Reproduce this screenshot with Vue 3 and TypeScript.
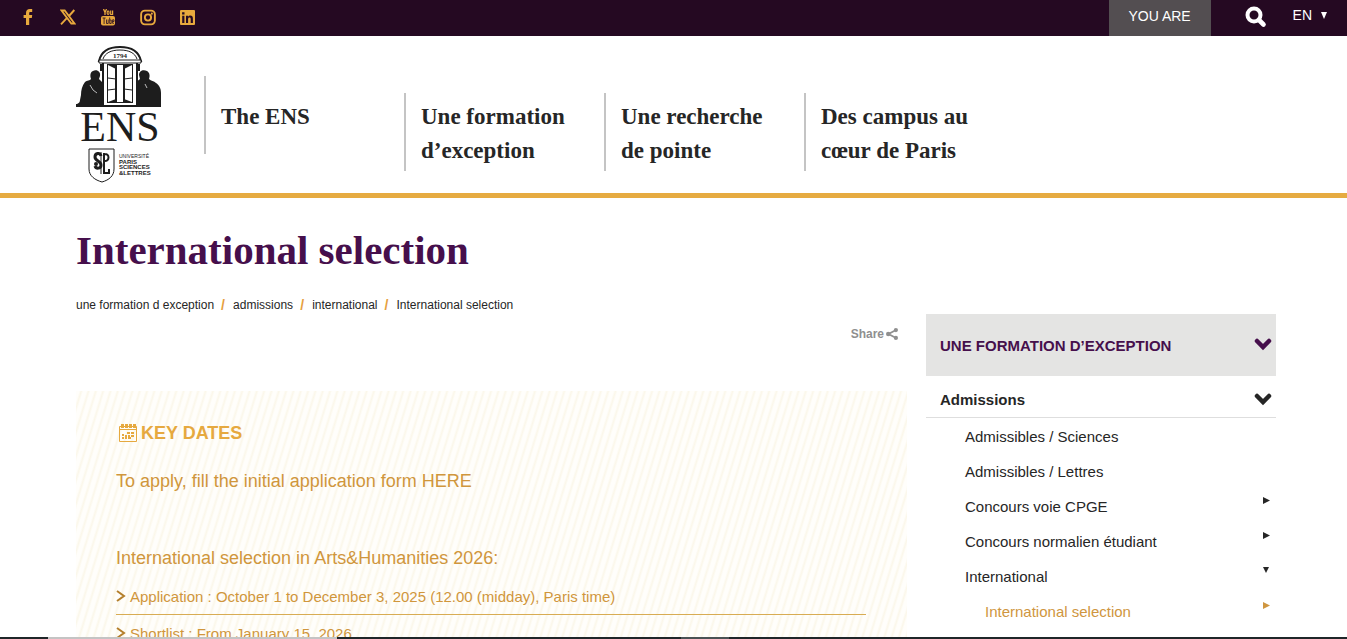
<script setup lang="ts">
interface NavItem {
  lines: string[]
}
interface SideItem {
  label: string
  arrow: '' | 'right' | 'down'
  current?: boolean
}

const navItems: NavItem[] = [
  { lines: ['The ENS'] },
  { lines: ['Une formation', 'd’exception'] },
  { lines: ['Une recherche', 'de pointe'] },
  { lines: ['Des campus au', 'cœur de Paris'] },
]

const crumbs: string[] = ['une formation d exception', 'admissions', 'international', 'International selection']

const dates: string[] = [
  'Application : October 1 to December 3, 2025 (12.00 (midday), Paris time)',
  'Shortlist : From January 15, 2026',
]

const sideItems: SideItem[] = [
  { label: 'Admissibles / Sciences', arrow: '' },
  { label: 'Admissibles / Lettres', arrow: '' },
  { label: 'Concours voie CPGE', arrow: 'right' },
  { label: 'Concours normalien étudiant', arrow: 'right' },
  { label: 'International', arrow: 'down' },
  { label: 'International selection', arrow: 'right', current: true },
]
</script>

<template>
  <div class="page">
    <div class="topbar">
      <div class="social">
        <a href="#" aria-label="Facebook">
          <svg width="16" height="16" viewBox="0 0 16 16"><path d="M6 16V9H3.600V6H6V4C6 1.400 7.500 0 9.800 0h2.400v3h-1.700C9.500 3 9.200 3.500 9.200 4.200V6h3l-.4 3H9.200v7z" fill="currentColor" /></svg>
        </a>
        <a href="#" aria-label="X">
          <svg width="16" height="16" viewBox="0 0 16 16"><path d="M1.500 1.500h3.200l9.800 13h-3.200z" fill="none" stroke="currentColor" stroke-width="1.800" /><path d="M14.300 1 9 7M6.800 9.200 1 15.300" fill="none" stroke="currentColor" stroke-width="1.900" /></svg>
        </a>
        <a href="#" aria-label="YouTube">
          <svg width="16" height="17" viewBox="0 0 16 17">
            <path d="M3.500 0 5 3.400V6M6.500 0 5 3.400" fill="none" stroke="currentColor" stroke-width="1.300" />
            <rect x="7.200" y="2" width="1.800" height="3.500" rx=".9" fill="none" stroke="currentColor" stroke-width="1.100" />
            <path d="M10.700 1.500v4h1.900v-4" fill="none" stroke="currentColor" stroke-width="1.200" />
            <rect x="1" y="7" width="14" height="9.500" rx="2" fill="currentColor" />
            <path d="M2.600 9h3M4.100 9v6M6.500 10.500v4h1.700v-4M9.700 8.500v6h1.500v-3.500H9.700M13.900 14.300h-1.300v-3.500h1.400v1.700h-1.400" fill="none" stroke="#250922" stroke-width=".8" />
          </svg>
        </a>
        <a href="#" aria-label="Instagram">
          <svg width="16" height="17" viewBox="0 0 17 17"><rect x="1.200" y="1.200" width="14.600" height="14.600" rx="4" fill="none" stroke="currentColor" stroke-width="2" /><circle cx="8.500" cy="8.500" r="3.300" fill="none" stroke="currentColor" stroke-width="2" /><circle cx="12.600" cy="4.400" r="1.100" fill="currentColor" /></svg>
        </a>
        <a href="#" aria-label="LinkedIn">
          <svg width="15" height="15" viewBox="0 0 15 15"><rect width="15" height="15" rx="1" fill="currentColor" /><path d="M2.200 5.800h2.200V13H2.200zM2.100 2.300h2.400v2.200H2.100zM6 5.800h2v1c.5-.8 1.200-1.200 2.200-1.200 2 0 2.700 1.200 2.700 3.200V13h-2.200V9.300c0-1-.3-1.700-1.200-1.700-1 0-1.400.7-1.400 1.700V13H6z" fill="#250922" /></svg>
        </a>
      </div>
      <div class="tools">
        <button class="you-are" type="button">YOU ARE</button>
        <button class="search" type="button" aria-label="Search">
          <svg width="22" height="22" viewBox="0 0 22 22"><circle cx="9" cy="9" r="6.500" fill="none" stroke="#fff" stroke-width="4" /><path d="m14 14 4.500 4.500" stroke="#fff" stroke-width="4.600" stroke-linecap="round" /></svg>
        </button>
        <button class="lang" type="button">EN <svg width="8" height="7" viewBox="0 0 8 7"><path d="M1 0h6L4 7z" fill="#fff" /></svg></button>
      </div>
    </div>

    <header class="header">
      <a class="logo" href="#" aria-label="ENS">
        <svg width="86" height="140" viewBox="0 0 86 140">
          <g fill="#1d1d1d">
            <path d="M1 58c2-1 3-2 3-4l1-5c0-5 1-9 4-13 2-2 5-1 6-3-1-3-1-7 2-8 4-2 8 1 7 5l-1 3 5 5v21H1z" />
            <path d="M85 60V47c0-5-2-8-5-10-2-2-5-2-7-4 1-3 1-6-2-8-4-2-8 0-8 4l1 4-5 4v22z" />
            <path d="M0 58h85v3H0z" />
          </g>
          <path d="m14 39 3 5 4 3M69 38l2 4" fill="none" stroke="#fff" stroke-width=".7" />
          <path d="M23 15C25 6 32 1 44 1s19 5 21 14z" fill="#fff" stroke="#1d1d1d" stroke-width="2" />
          <path d="M27 13C29 7 35 4 44 4s15 3 17 9" fill="none" stroke="#1d1d1d" stroke-width="1" />
          <path d="M27 15h34v45H27z" fill="#fff" stroke="#1d1d1d" stroke-width="2" />
          <path d="M23 14h42v3H23z" fill="#fff" stroke="#1d1d1d" stroke-width="1" />
          <path d="M24 18h3v7h-3zM61 18h3v7h-3z" fill="#1d1d1d" />
          <path d="M31 18h26v39H31z" fill="#1d1d1d" />
          <path d="M41 19h6v37h-6z" fill="#fff" />
          <path d="m32 19 8 4v30l-8 3zM56 19l-8 4v30l8 3z" fill="#fff" />
          <path d="m32 32 8 1M32 44l8-1M56 32l-8 1M56 44l-8-1" stroke="#1d1d1d" stroke-width="1" />
          <path d="M40 22v32M48 22v32" stroke="#1d1d1d" stroke-width="2" />
          <text x="44" y="12" text-anchor="middle" class="logo-year">1794</text>
          <text x="44" y="95" text-anchor="middle" class="logo-ens">ENS</text>
          <path d="M13 103h25v20c0 7-5 11-12 13-7-2-13-6-13-13z" fill="#fff" stroke="#1d1d1d" stroke-width="1" />
          <path d="M25 110c-1-4-6-3-6 1 0 4 6 4 6 8 0 4-5 4-6 1" fill="none" stroke="#1d1d1d" stroke-width="3" />
          <path d="M25 106v22" fill="none" stroke="#1d1d1d" stroke-width="1" />
          <path d="M28 107v20h5v-4M28 108c6-1 6 8 0 7" fill="none" stroke="#1d1d1d" stroke-width="2" />
          <circle cx="20" cy="118" r="2" fill="#1d1d1d" />
          <g class="logo-psl">
            <text x="43" y="112" class="light">UNIVERSITÉ</text>
            <text x="43" y="118">PARIS</text>
            <text x="43" y="123">SCIENCES</text>
            <text x="43" y="129">&amp;LETTRES</text>
          </g>
        </svg>
      </a>
      <nav class="nav">
        <a v-for="item in navItems" :key="item.lines[0]" href="#" :class="{ single: item.lines.length === 1 }">
          <span v-for="line in item.lines" :key="line">{{ line }}</span>
        </a>
      </nav>
    </header>

    <div class="container">
      <h1>International selection</h1>
      <nav class="crumbs" aria-label="Breadcrumb">
        <template v-for="(crumb, i) in crumbs" :key="crumb">
          <span v-if="i > 0" class="slash">/</span>
          <a href="#">{{ crumb }}</a>
        </template>
      </nav>

      <div class="columns">
        <main>
          <div class="share-row">
            <a href="#" class="share">Share
              <svg width="12" height="12" viewBox="0 0 12 12"><path d="M10 2 2.500 6l7.500 4" fill="none" stroke="currentColor" stroke-width="1.800" /><circle cx="9.900" cy="2.100" r="2.100" fill="currentColor" /><circle cx="2.200" cy="6" r="2.200" fill="currentColor" /><circle cx="9.900" cy="9.900" r="2.100" fill="currentColor" /></svg>
            </a>
          </div>
          <section class="panel">
            <h2>
              <svg width="18" height="18" viewBox="0 0 18 18"><path d="M.5 2.500h17v15H.5zM.5 5.500h17" fill="none" stroke="currentColor" stroke-width="1" /><path d="M2 0h3v4H2zM6 0h3v4H6zM10 0h3v4h-3zM14 0h3v4h-3z" fill="currentColor" /><path d="M8 8h3v2H8zM12 8h3v2h-3zM3 10h2v2H3zM6 11h2v2H6zM9 11h2v2H9zM12 11h3v2h-3zM3 13h2v2H3zM6 13h2v2H6zM9 13h3v2H9z" fill="currentColor" /></svg>
              KEY DATES
            </h2>
            <p class="apply">To apply, fill the initial application form <a href="#">HERE</a></p>
            <h3>International selection in Arts&amp;Humanities 2026:</h3>
            <ul>
              <li v-for="date in dates" :key="date">
                <svg width="10" height="12" viewBox="0 0 10 12"><path d="m1 1 7 5-7 5" fill="none" stroke="#b47f2c" stroke-width="2" /></svg>
                <span>{{ date }}</span>
              </li>
            </ul>
          </section>
        </main>

        <aside>
          <button class="side-title" type="button">
            UNE FORMATION D’EXCEPTION
            <svg width="18" height="14" viewBox="0 0 18 14"><path d="m3 3 6 6 6-6" fill="none" stroke="currentColor" stroke-width="4.500" stroke-linecap="round" /></svg>
          </button>
          <button class="side-sub" type="button">
            Admissions
            <svg width="18" height="14" viewBox="0 0 18 14"><path d="m3 3 6 6 6-6" fill="none" stroke="currentColor" stroke-width="4.500" stroke-linecap="round" /></svg>
          </button>
          <ul>
            <li v-for="item in sideItems" :key="item.label" :class="{ current: item.current }">
              <a href="#">{{ item.label }}</a>
              <svg v-if="item.arrow" width="8" height="8" viewBox="0 0 8 8"><path :d="item.arrow === 'right' ? 'M1 1v7l7-3.500z' : 'M1 1h6L4 7z'" fill="currentColor" /></svg>
            </li>
          </ul>
        </aside>
      </div>
    </div>
    <div class="edge"></div>
  </div>
</template>

<style>
body {
  margin: 0;
}
</style>

<style scoped>
.page {
  position: relative;
  height: 100vh;
  overflow: hidden;
  background: #fff;
  color: #262626;
  font-family: "Liberation Sans", Arial, sans-serif;
}
a {
  color: inherit;
  text-decoration: none;
}
button {
  border: 0;
  margin: 0;
  padding: 0;
  background: none;
  font-family: inherit;
  color: inherit;
  cursor: pointer;
}
ul {
  list-style: none;
  margin: 0;
  padding: 0;
}
svg {
  display: block;
  flex: none;
}
.topbar {
  display: flex;
  justify-content: space-between;
  height: 36px;
  background: #250922;
  color: #fff;
}
.social {
  display: flex;
  align-items: center;
  gap: 24px;
  padding: 0 0 2px 20px;
  color: #e8a93d;
}
.tools {
  display: flex;
  padding-right: 19px;
}
.tools button {
  font-size: 14px;
  line-height: 16px;
}
.tools .you-are {
  width: 102px;
  padding-bottom: 4px;
  background: #534e51;
}
.tools .search {
  padding: 0 26px 2px 34px;
}
.tools .lang {
  display: flex;
  align-items: center;
  gap: 8px;
  padding-bottom: 6px;
}
.header {
  display: flex;
  align-items: flex-start;
  padding: 10px 71px 7px 76px;
  border-bottom: 5px solid #e6ab41;
}
.logo {
  width: 128px;
}
.logo-year {
  font: bold 7px "Liberation Serif", serif;
  fill: #1d1d1d;
}
.logo-ens {
  font: 42px "Liberation Serif", serif;
  fill: #1d1d1d;
}
.logo-psl {
  font: bold 6px "Liberation Sans", sans-serif;
  fill: #1d1d1d;
}
.logo-psl .light {
  font-weight: normal;
  font-size: 5px;
}
.nav {
  display: flex;
  align-items: baseline;
  padding-top: 30px;
}
.nav a {
  display: flex;
  flex-direction: column;
  box-sizing: border-box;
  width: 200px;
  padding: 7px 0 3px 15px;
  border-left: 2px solid #c4c4c4;
  font-family: "Liberation Serif", "Times New Roman", serif;
  font-size: 23px;
  font-weight: bold;
  line-height: 34px;
}
.nav a.single {
  padding-top: 24px;
  padding-bottom: 20px;
}
.container {
  padding: 28px 71px 0 76px;
}
h1 {
  margin: 0;
  font-family: "Liberation Serif", "Times New Roman", serif;
  font-size: 41px;
  line-height: 48px;
  font-weight: bold;
  color: #460f4c;
}
.crumbs {
  display: flex;
  align-items: center;
  gap: 7px;
  margin-top: 23px;
  height: 16px;
  font-size: 12px;
}
.slash {
  width: 5px;
  color: #e6a040;
  font-size: 14px;
  font-weight: bold;
}
.columns {
  display: flex;
  align-items: flex-start;
  gap: 19px;
  padding-top: 1px;
}
main {
  flex: 1;
}
.share-row {
  display: flex;
  justify-content: flex-end;
  height: 77px;
  padding: 0 9px 0 0;
  box-sizing: border-box;
}
.share {
  display: flex;
  align-items: center;
  gap: 2px;
  height: 40px;
  font-size: 12px;
  font-weight: bold;
  color: #8f8f8f;
}
.panel {
  padding: 32px 41px 0 40px;
  background: repeating-linear-gradient(107deg, #fffefb 0 3px, #fbf7ea 5px, #fffefb 7px);
  color: #d0963c;
}
h2 {
  display: flex;
  align-items: center;
  gap: 4px;
  margin: 0 0 0 3px;
  font-size: 18px;
  line-height: 20px;
  color: #e6a93f;
}
.apply {
  margin: 28px 0 0;
  font-size: 18px;
  line-height: 20px;
}
h3 {
  margin: 57px 0 0;
  font-size: 18px;
  line-height: 20px;
  font-weight: normal;
}
.panel ul {
  margin-top: 10px;
}
.panel li {
  display: flex;
  align-items: center;
  gap: 4px;
  height: 36px;
  border-bottom: 1px solid #d8ac53;
  font-size: 15px;
}
aside {
  width: 350px;
}
.side-title,
.side-sub {
  display: flex;
  align-items: center;
  justify-content: space-between;
  box-sizing: border-box;
  width: 100%;
  padding: 0 4px 0 14px;
  font-size: 15px;
  font-weight: bold;
}
.side-title {
  height: 62px;
  background: #e4e4e3;
  color: #460f4c;
}
.side-sub {
  height: 42px;
  padding-top: 6px;
  border-bottom: 1px solid #dedede;
}
.tools button,
.side-title,
.side-sub {
  white-space: nowrap;
}
aside ul {
  padding-top: 1px;
}
aside li {
  display: flex;
  justify-content: space-between;
  align-items: flex-start;
  height: 35px;
  padding: 0 6px 0 39px;
  font-size: 15px;
  line-height: 36px;
}
aside li svg {
  margin-top: 7px;
}
aside li.current {
  padding-left: 59px;
  color: #cf9640;
}
.edge {
  position: absolute;
  left: 0;
  right: 0;
  bottom: 0;
  height: 2px;
  background: linear-gradient(90deg, #1f2629 48px, #c4c4c4 48px 337px, #1f2629 337px 681px, #4a5254 681px 729px, #1f2629 729px);
}
</style>
